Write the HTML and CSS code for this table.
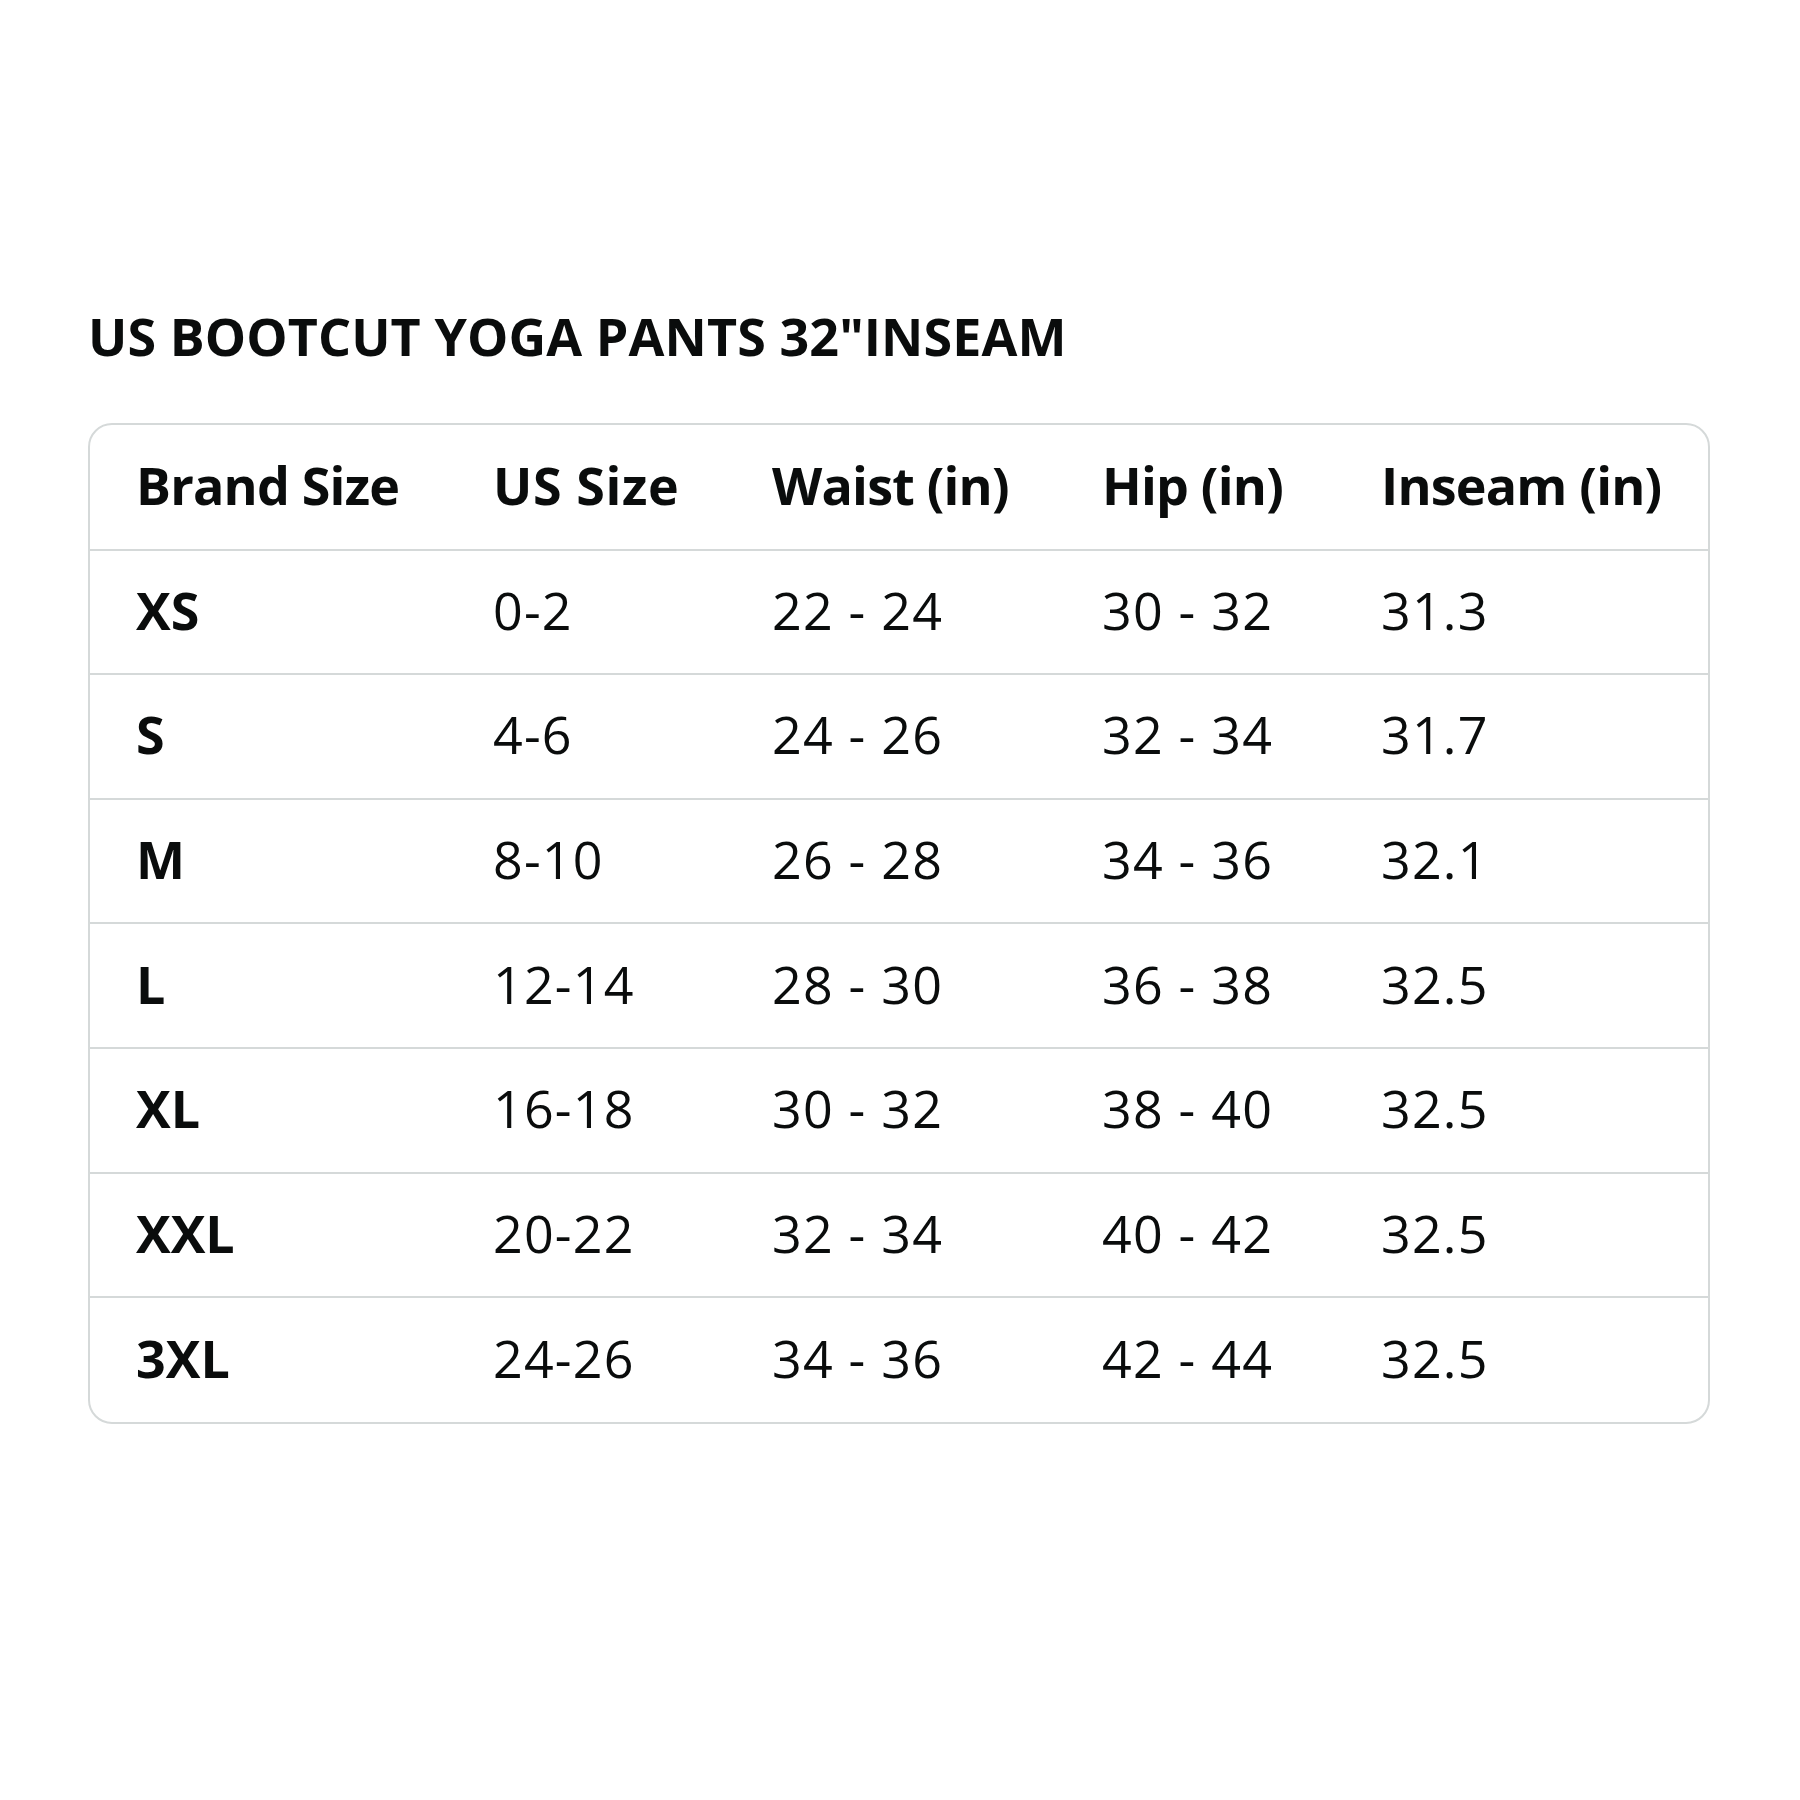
FILE: index.html
```html
<!DOCTYPE html>
<html>
<head>
<meta charset="utf-8">
<title>US Bootcut Yoga Pants Size Chart</title>
<link rel="stylesheet" href="styles.css">
</head>
<body>
<main class="page">
  <h1 class="title">US BOOTCUT YOGA PANTS 32"INSEAM</h1>
  <div class="chart">
    <table class="size-table">
      <colgroup>
        <col class="c1"><col class="c2"><col class="c3"><col class="c4"><col class="c5">
      </colgroup>
      <thead>
        <tr><th>Brand Size</th><th class="us">US Size</th><th>Waist (in)</th><th>Hip (in)</th><th>Inseam (in)</th></tr>
      </thead>
      <tbody>
        <tr><td class="brand">XS</td><td>0-2</td><td>22 - 24</td><td>30 - 32</td><td>31.3</td></tr>
        <tr><td class="brand">S</td><td>4-6</td><td>24 - 26</td><td>32 - 34</td><td>31.7</td></tr>
        <tr><td class="brand">M</td><td>8-10</td><td>26 - 28</td><td>34 - 36</td><td>32.1</td></tr>
        <tr><td class="brand">L</td><td>12-14</td><td>28 - 30</td><td>36 - 38</td><td>32.5</td></tr>
        <tr><td class="brand">XL</td><td>16-18</td><td>30 - 32</td><td>38 - 40</td><td>32.5</td></tr>
        <tr><td class="brand">XXL</td><td>20-22</td><td>32 - 34</td><td>40 - 42</td><td>32.5</td></tr>
        <tr><td class="brand">3XL</td><td>24-26</td><td>34 - 36</td><td>42 - 44</td><td>32.5</td></tr>
      </tbody>
    </table>
  </div>
</main>
</body>
</html>
```
FILE: styles.css
```css
html, body {
  margin: 0;
  padding: 0;
  background: #ffffff;
}
body {
  font-family: "Open Sans", "Noto Sans", sans-serif;
  color: #0a0c0c;
}
.page {
  padding: 310px 0 0 88px;
  width: 1622px;
}
.title {
  margin: 0 0 61px 0;
  font-size: 52px;
  line-height: 52px;
  font-weight: 700;
  letter-spacing: 0.1px;
  white-space: nowrap;
}
.chart {
  box-sizing: border-box;
  width: 1622px;
  border: 2px solid #d5d9d9;
  border-radius: 24px;
  overflow: hidden;
}
.size-table {
  width: 100%;
  border-collapse: collapse;
  table-layout: fixed;
}
.c1 { width: 357px; }
.c2 { width: 279px; }
.c3 { width: 330px; }
.c4 { width: 279px; }
.c5 { width: auto; }
.size-table th,
.size-table td {
  box-sizing: border-box;
  height: 124.6px;
  padding: 0 0 5px 46px;
  text-align: left;
  vertical-align: middle;
  font-size: 52px;
  white-space: nowrap;
}
.size-table th {
  font-weight: 700;
  letter-spacing: -0.8px;
}
.size-table th.us {
  letter-spacing: 0.6px;
}
.size-table td {
  font-weight: 400;
  letter-spacing: 1.2px;
}
.size-table td.brand {
  font-weight: 700;
  letter-spacing: 0;
}
.size-table tbody tr {
  border-top: 2px solid #d5d9d9;
}
```
